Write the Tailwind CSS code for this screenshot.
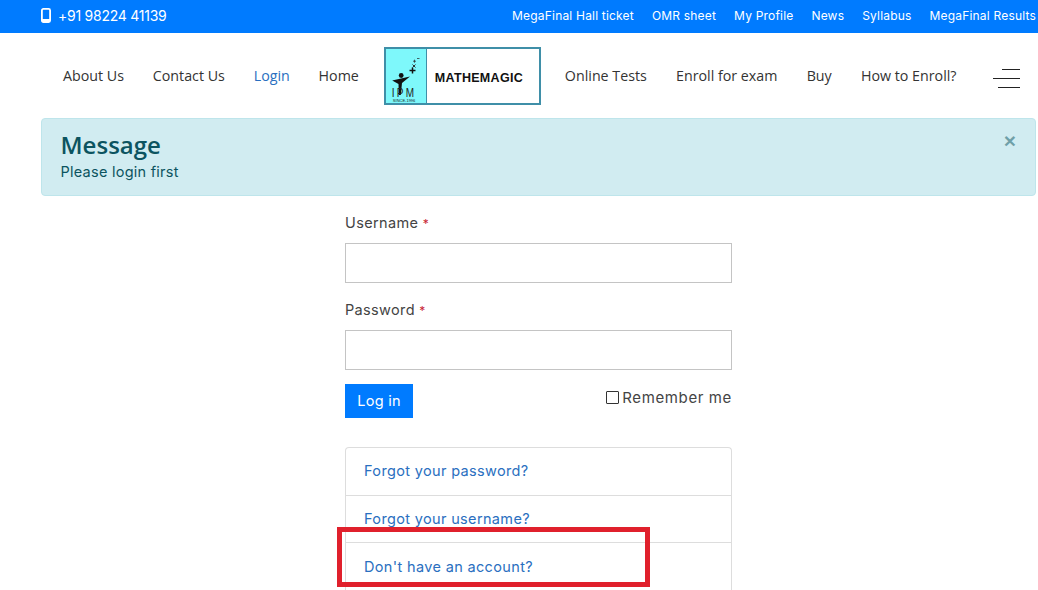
<!DOCTYPE html>
<html lang="en">
<head>
<meta charset="utf-8">
<script src="https://cdn.jsdelivr.net/npm/@tailwindcss/browser@4"></script>
<title>Login</title>
</head>
<body class="bg-white">
<div class="relative h-[590px] w-[1038px] overflow-hidden bg-white font-['Inter',sans-serif] text-[#444]">
  <header class="flex h-[33px] items-center justify-between bg-[#007bff] pl-[41px] pr-[2px] text-white">
    <div class="flex items-center gap-[7px] pb-[2px] text-[14px] tracking-[-0.25px]">
      <svg width="10" height="15" viewBox="0 0 10 15" fill="none"><rect x="0.9" y="0.9" width="8.2" height="13.2" rx="1.5" stroke="white" stroke-width="1.8"/><rect x="1" y="11" width="8" height="3" fill="white"/></svg>
      <span>+91 98224 41139</span>
    </div>
    <nav class="flex items-center gap-[18px] pb-[1px] text-[12px] tracking-[0.19px]">
      <a>MegaFinal Hall ticket</a><a>OMR sheet</a><a>My Profile</a><a>News</a><a>Syllabus</a><a>MegaFinal Results</a>
    </nav>
  </header>

  <nav class="flex h-[85px] items-center pl-[63px] font-['Open_Sans',sans-serif] text-[14.25px] text-[#333]">
    <div class="flex items-center gap-[28.8px]">
      <a>About Us</a><a>Contact Us</a><a class="text-[#2a6fc0]">Login</a><a>Home</a>
    </div>
    <div class="ml-[25px] flex h-[58px] w-[157px] border-2 border-[#3f8fa8]">
      <div class="relative w-[41px] shrink-0 border-r border-[#3f8fa8] bg-[#7ef8fb]">
        <svg class="absolute left-[6px] top-[8px]" width="30" height="40" viewBox="0 0 30 40"><circle cx="9.2" cy="18.5" r="2.4" fill="#111"/><path d="M0.2 23.5 L18 19.5 L10 26 L8.8 38 L6.8 38 L6.5 27 Z" fill="#111"/><path d="M17.5 13.5 h6 M20.5 10.5 v6" stroke="#111" stroke-width="1.5"/><path d="M20.5 7.5 l3 3 M23.5 7.5 l-3 3" stroke="#222" stroke-width="0.9"/><path d="M21 4.2 h3 M22.5 2.7 v3" stroke="#222" stroke-width="0.7"/><path d="M25 1.5 h2.5" stroke="#222" stroke-width="0.7"/></svg>
        <span class="absolute left-[6px] top-[37px] origin-top scale-y-[1.35] font-['Liberation_Sans',sans-serif] text-[10px] leading-[10px] tracking-[2.2px] text-[#222]">IPM</span>
        <span class="absolute left-[7px] top-[50px] font-['Liberation_Sans',sans-serif] text-[4px] leading-[4px] text-[#222]">SINCE-1996</span>
      </div>
      <div class="flex flex-1 items-center pl-[8px] pt-[6px] font-['Liberation_Sans',sans-serif] text-[12.5px] font-bold tracking-[0.3px] text-[#111]">MATHEMAGIC</div>
    </div>
    <div class="ml-[24px] flex items-center gap-[29.2px]">
      <a>Online Tests</a><a>Enroll for exam</a><a>Buy</a><a>How to Enroll?</a>
    </div>
    <div class="ml-[36px] mt-[6px] flex w-[27px] flex-col items-end gap-[8px]">
      <span class="h-[1px] w-[18px] bg-[#222]"></span>
      <span class="h-[1px] w-[27px] bg-[#222]"></span>
      <span class="h-[1px] w-[22px] bg-[#222]"></span>
    </div>
  </nav>

  <div class="relative ml-[41px] h-[78px] w-[995px] rounded-[4px] border border-[#bee5eb] bg-[#d1ecf1] pl-[18.5px] pt-[11px] text-[#0c5460]">
    <h4 class="font-['Open_Sans',sans-serif] text-[24px] font-semibold leading-[29px]">Message</h4>
    <p class="mt-[2px] text-[14.5px] leading-[21px] tracking-[0.25px]">Please login first</p>
    <span class="absolute right-[19px] top-[11px] font-['Liberation_Sans',sans-serif] text-[21px] font-bold leading-[21px] text-[#0c5460]/50">×</span>
  </div>

  <form class="ml-[345px] w-[387px] text-[14.5px] tracking-[0.35px]">
    <label class="mt-[16px] block h-[21px] leading-[21px] text-[#444]">Username <span class="text-[12px] leading-none text-[#c82333]">*</span></label>
    <div class="mt-[10px] h-[40px] w-full border border-[#c4c4c4] bg-white"></div>
    <label class="mt-[16px] block h-[21px] leading-[21px] text-[#444]">Password <span class="text-[12px] leading-none text-[#c82333]">*</span></label>
    <div class="mt-[10px] h-[40px] w-full border border-[#c4c4c4] bg-white"></div>
    <div class="mt-[14px] flex items-start justify-between">
      <button type="button" class="h-[34px] w-[68px] bg-[#007bff] pb-[1px] text-[14.5px] tracking-[0.25px] text-white">Log in</button>
      <div class="mt-[3px] flex items-center gap-[3px]">
        <span class="h-[13px] w-[13px] rounded-[1px] border border-[#333] bg-white"></span>
        <span class="text-[15px] leading-[21px] tracking-[0.62px] text-[#444]">Remember me</span>
      </div>
    </div>
    <div class="mt-[29px] rounded-t-[4px] border border-b-0 border-[#ddd] text-[#2a6fc0]">
      <a class="flex h-[48px] items-center border-b border-[#ddd] pb-[2px] pl-[18px]">Forgot your password?</a>
      <a class="flex h-[47px] items-center border-b border-[#ddd] pb-[1px] pl-[18px]">Forgot your username?</a>
      <a class="flex h-[48px] items-center pl-[18px]">Don't have an account?</a>
    </div>
  </form>

  <div class="absolute left-[337px] top-[527px] h-[60px] w-[313px] border-[5px] border-[#e0202c]"></div>
</div>
</body>
</html>
